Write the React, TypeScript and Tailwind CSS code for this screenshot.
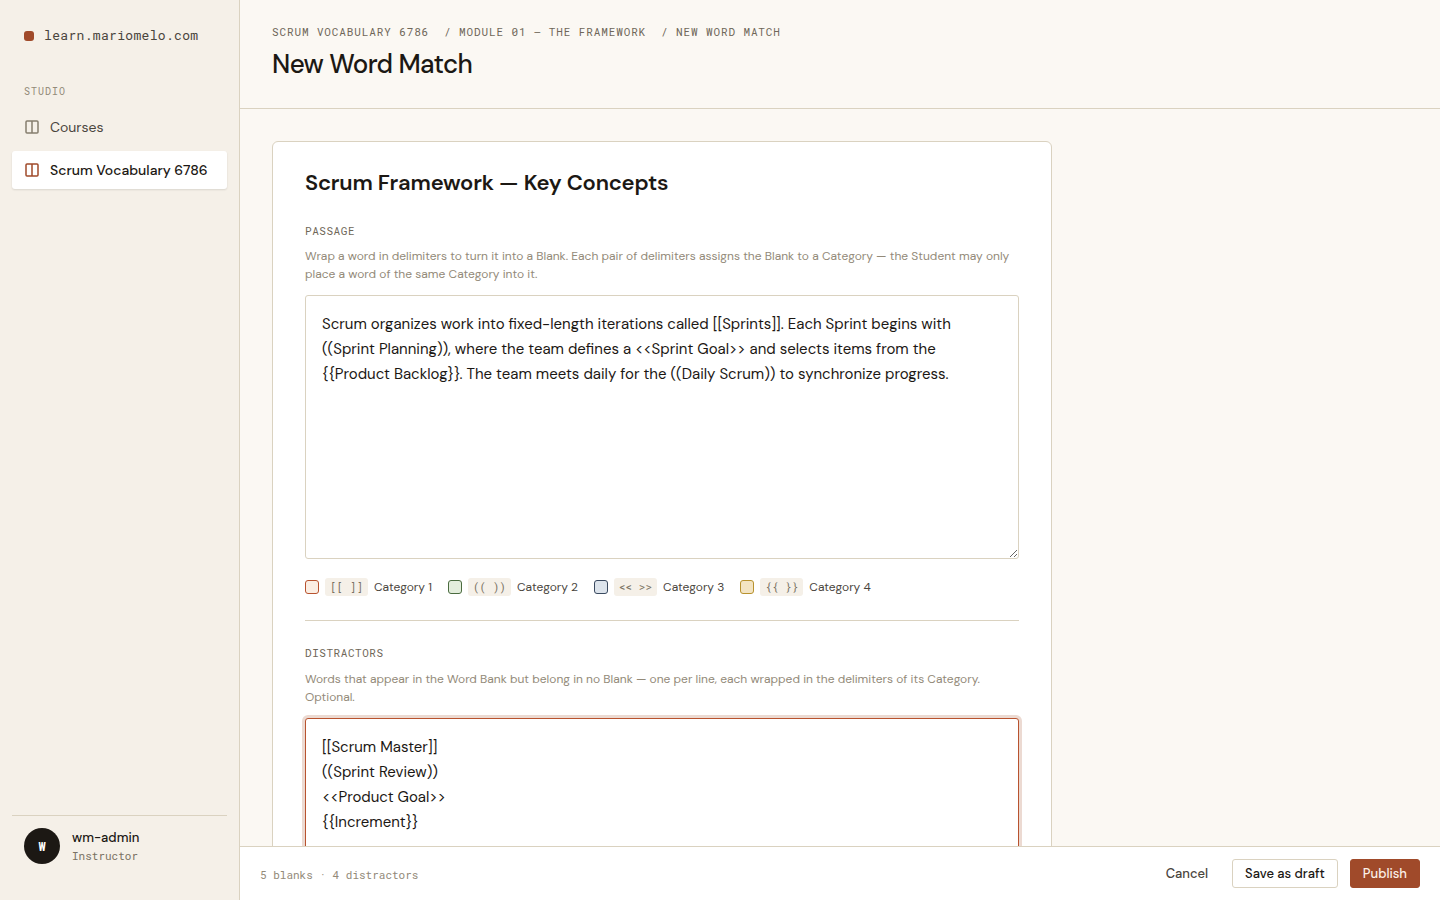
const sans = "font-['DM_Sans','Roboto','Noto_Sans',sans-serif]";
const mono = "font-['Roboto_Mono','DM_Mono','Liberation_Mono',monospace]";

const passage =
  'Scrum organizes work into fixed-length iterations called [[Sprints]]. Each Sprint begins with ((Sprint Planning)), where the team defines a <<Sprint Goal>> and selects items from the {{Product Backlog}}. The team meets daily for the ((Daily Scrum)) to synchronize progress.';
const distractors = '[[Scrum Master]]\n((Sprint Review))\n<<Product Goal>>\n{{Increment}}';

const categories = [
  { label: 'Category 1', marks: '[[ ]]', swatch: 'border-[#b8532f] bg-[#fbeee3]' },
  { label: 'Category 2', marks: '(( ))', swatch: 'border-[#4a6b3f] bg-[#e3eddc]' },
  { label: 'Category 3', marks: '<< >>', swatch: 'border-[#3a4a60] bg-[#dde4ec]' },
  { label: 'Category 4', marks: '{{ }}', swatch: 'border-[#b8922f] bg-[#f3e4c3]' },
];

function CourseIcon({ className }: { className: string }) {
  return (
    <svg viewBox="0 0 16 16" fill="none" stroke="currentColor" strokeWidth="1.5" aria-hidden="true" className={`size-4 shrink-0 ${className}`}>
      <path d="M2 3a1 1 0 0 1 1-1h5v12H3a1 1 0 0 1-1-1V3ZM14 3a1 1 0 0 0-1-1H8v12h5a1 1 0 0 0 1-1V3Z" />
    </svg>
  );
}

function Sidebar() {
  return (
    <aside className="flex w-60 shrink-0 flex-col border-r border-[#dad2c0] bg-[#f5f0e8] px-3 pt-6 pb-6">
      <a href="#home" className={`${mono} flex h-6 items-center gap-2.5 px-3 text-[13px] tracking-wide text-[#4a453d]`}>
        <span className="size-2.5 rounded-[3px] bg-[#a04a2a]" />
        learn.mariomelo.com
      </a>
      <div className={`${mono} mt-9 px-3 text-[10px] leading-4 tracking-widest text-[#938a79]`}>STUDIO</div>
      <nav className="mt-2 flex flex-col gap-[5px] text-sm">
        <a href="#courses" className="flex h-[38px] items-center gap-2.5 px-3 text-[#4a453d]">
          <CourseIcon className="text-[#857d6e]" />
          Courses
        </a>
        <a href="#vocabulary" className="flex h-[38px] items-center gap-2.5 rounded-[3px] bg-white px-3 font-medium text-[#1c1814] shadow-[0_1px_2px_rgba(28,24,20,0.12)]">
          <CourseIcon className="text-[#a04a2a]" />
          Scrum Vocabulary 6786
        </a>
      </nav>
      <div className="mt-auto flex items-center gap-3 border-t border-[#dad2c0] px-3 pt-3 pb-3">
        <span className={`${mono} flex size-9 items-center justify-center rounded-full bg-[#1c1814] text-xs font-bold text-white`}>W</span>
        <div>
          <div className="text-[13px] leading-5 font-medium text-[#1c1814]">wm-admin</div>
          <div className={`${mono} text-[11px] leading-4 text-[#7a7263]`}>Instructor</div>
        </div>
      </div>
    </aside>
  );
}

export default function App() {
  return (
    <div className={`${sans} flex h-screen bg-[#fbf8f3] text-[#1c1814]`}>
      <Sidebar />
      <div className="flex min-w-0 flex-1 flex-col">
        <header className="shrink-0 border-b border-[#dad2c0] px-8 pt-6 pb-7">
          <nav aria-label="Breadcrumb" className={`${mono} flex gap-[15px] text-[11px] leading-4 tracking-[0.08em] text-[#6f6759]`}>
            <a href="#vocabulary">SCRUM VOCABULARY 6786</a>
            <a href="#module">/ MODULE 01 — THE FRAMEWORK</a>
            <span>/ NEW WORD MATCH</span>
          </nav>
          <h1 className="mt-2 text-[26px] leading-8 font-medium tracking-tight">New Word Match</h1>
        </header>
        <main className="min-h-0 flex-1 overflow-y-auto p-8 [scrollbar-width:none]">
          <form className="max-w-[780px] rounded-md border border-[#dad2c0] bg-white p-8">
            <h2 className="-mt-1 text-[22px] leading-[26px] font-semibold tracking-[-0.01em]">Scrum Framework — Key Concepts</h2>
            <label htmlFor="passage" className={`${mono} mt-[27px] block text-[11px] leading-4 tracking-wider text-[#6f6759]`}>PASSAGE</label>
            <p className="mt-2 text-xs leading-[18px] text-[#938a79]">
              Wrap a word in delimiters to turn it into a Blank. Each pair of delimiters assigns the Blank to a Category — the Student may only place a word of the same Category into it.
            </p>
            <textarea id="passage" defaultValue={passage} className="mt-3 block h-[264px] w-full rounded-[3px] border border-[#dad2c0] bg-white p-4 text-[15px] leading-[25px] outline-none" />
            <ul className="mt-[19px] flex flex-wrap gap-x-4 gap-y-2 text-xs leading-[18px] text-[#4a453d]">
              {categories.map((c) => (
                <li key={c.label} className="flex items-center gap-1.5">
                  <span className={`size-3.5 rounded-[3px] border ${c.swatch}`} />
                  <code className={`${mono} rounded-[3px] bg-[#f5f0e8] px-[5px] text-[11px] text-[#7a7263]`}>{c.marks}</code>
                  {c.label}
                </li>
              ))}
            </ul>
            <div className="mt-6 border-t border-[#dad2c0] pt-6">
              <label htmlFor="distractors" className={`${mono} block text-[11px] leading-4 tracking-wider text-[#6f6759]`}>DISTRACTORS</label>
              <p className="mt-[9px] text-xs leading-[18px] text-[#938a79]">
                Words that appear in the Word Bank but belong in no Blank — one per line, each wrapped in the delimiters of its Category. Optional.
              </p>
              <textarea id="distractors" rows={6} defaultValue={distractors} className="mt-3 block w-full rounded-[3px] border border-[#b8532f] bg-white p-4 text-[15px] leading-[25px] ring-3 ring-[#ecdad2] outline-none" />
            </div>
          </form>
        </main>
        <footer className="flex h-[54px] shrink-0 items-center justify-between border-t border-[#dad2c0] bg-white px-5">
          <p className={`${mono} pt-0.5 text-[11px] leading-4 text-[#938a79]`}>5 blanks · 4 distractors</p>
          <div className="flex gap-3 text-[13px] leading-5 font-medium">
            <button type="button" className="h-[29px] px-3 text-[#4a453d]">Cancel</button>
            <button type="button" className="h-[29px] rounded-[3px] border border-[#dad2c0] bg-white px-3">Save as draft</button>
            <button type="button" className="h-[29px] rounded-[3px] border border-[#a04a2a] bg-[#a04a2a] px-3 text-[#fbf0e8]">Publish</button>
          </div>
        </footer>
      </div>
    </div>
  );
}
